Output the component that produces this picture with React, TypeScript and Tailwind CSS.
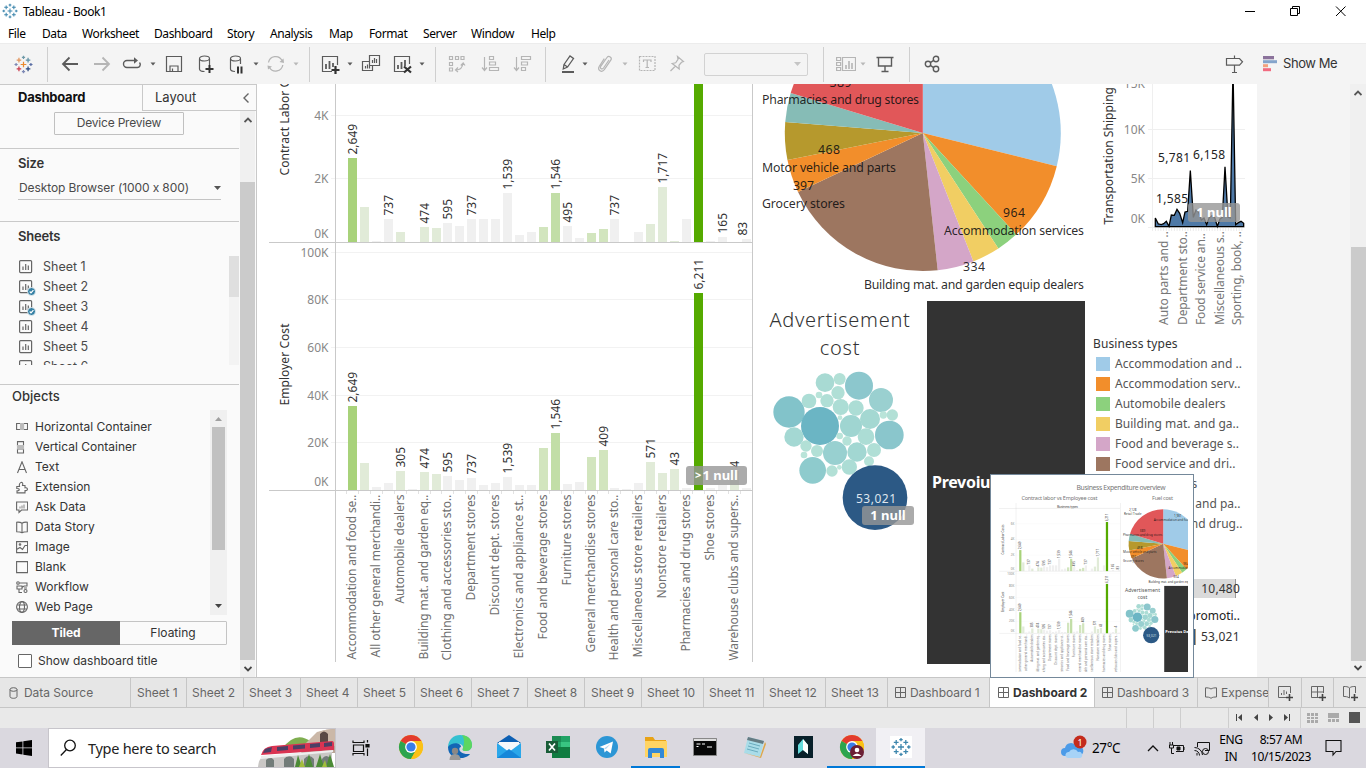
import React from "react";

const BAR_X = 348;
const PITCH = 11.93;
const G = "#f0f0f0";
const L = "#e1ebd8";
const M = "#d2e5be";
const N = "#c2dea7";
const H = "#a8d27a";
const D = "#55aa00";
const colors = [H, L, G, G, L, G, L, L, G, G, G, G, G, G, G, G, M, N, G, G, M, M, G, G, G, L, L, L, G, D, G, G, L, G];
const contract = [84, 35, 1, 23, 10, 0, 15, 14, 19, 16, 23, 23, 23, 49, 7, 10, 15, 49, 16, 4, 9, 13, 23, 0, 10, 18, 55, 1, 23, 196, 1, 5, 0, 3];
const employer = [84, 27, 3, 7, 19, 1, 18, 16, 14, 10, 12, 5, 7, 13, 5, 5, 42, 57, 6, 8, 33, 40, 2, 1, 7, 28, 17, 21, 2, 197, 2, 5, 19, 2];
type Lab = [number, string];
const contractLabels: Lab[] = [[0, "2,649"], [3, "737"], [6, "474"], [8, "595"], [10, "737"], [13, "1,539"], [17, "1,546"], [18, "495"], [22, "737"], [26, "1,717"], [29, "6,211"], [31, "165"], [32.7, "83"]];
const employerLabels: Lab[] = [[0, "2,649"], [4, "305"], [6, "474"], [8, "595"], [10, "737"], [13, "1,539"], [17, "1,546"], [21, "409"], [25, "571"], [27, "43"], [29, "6,211"], [32, "4"]];
const categories: [number, string, number][] = [
  [0, "Accommodation and food se..", 165], [2, "All other general merchandi..", 163], [4, "Automobile dealers", 109],
  [6, "Building mat. and garden eq..", 165], [8, "Clothing and accessories sto..", 166], [10, "Department stores", 106],
  [12, "Discount dept. stores", 121], [14, "Electronics and appliance st..", 164], [16, "Food and beverage stores", 145],
  [18, "Furniture stores", 91], [20, "General merchandise stores", 158], [22, "Health and personal care sto..", 166],
  [24, "Miscellaneous store retailers", 163], [26, "Nonstore retailers", 104], [28, "Pharmacies and drug stores", 157],
  [30, "Shoe stores", 66], [32, "Warehouse clubs and supers..", 166],
];

function Up({ x, y, children, len, fill = "#333", anchor = "start", size = 12 }: { x: number; y: number; children: string; len?: number; fill?: string; anchor?: "start" | "middle" | "end"; size?: number }) {
  return (
    <text transform={`translate(${x} ${y}) rotate(-90)`} textAnchor={anchor} textLength={len} fontSize={size} fill={fill}>{children}</text>
  );
}

function Bars({ values, labels, base }: { values: number[]; labels: Lab[]; base: number }) {
  return (
    <g>
      {values.map((h, i) => <rect key={i} x={Math.round(BAR_X + i * PITCH)} y={base - h} width={9} height={h} fill={colors[i]} />)}
      {labels.map(([k, t]) => (
        <Up key={k} x={BAR_X + k * PITCH + 9} y={base - values[Math.round(k)] - 3.5}>{t}</Up>
      ))}
    </g>
  );
}

function BarCharts() {
  return (
    <g>
      {[-11, 52, 115, 178, 252, 299, 347, 395, 442].map((y) => <path key={y} d={`M331 ${y + 0.5}H752`} stroke="#f2f2f2" />)}
      <Bars values={contract} labels={contractLabels} base={242} />
      <Bars values={employer} labels={employerLabels} base={490} />
      <path d="M269 242.5H752M269 490.5H752M335.5 -30V662M752.5 -30V662" stroke="#c9c9c9" fill="none" />
      {Array.from({ length: 34 }, (_, i) => <path key={i} d={`M${Math.round(BAR_X + i * PITCH) - 1.5} 491v3`} stroke="#e2e2e2" />)}
      {([["6K", 56], ["4K", 119.5], ["2K", 183], ["0K", 238], ["100K", 257], ["80K", 304], ["60K", 352], ["40K", 400], ["20K", 447], ["0K", 486]] as [string, number][]).map(([t, y]) => (
        <text key={y} x={328.5} y={y} textAnchor="end" fontSize={12} fill="#888">{t}</text>
      ))}
      <Up x={289} y={175.5} len={119}>Contract Labor Costs</Up>
      <Up x={289} y={405.5} len={82}>Employer Cost</Up>
      {categories.map(([k, t, len]) => (
        <Up key={t} x={BAR_X + k * PITCH + 8} y={494.5} len={len} anchor="end" fill="#707070">{t}</Up>
      ))}
    </g>
  );
}

const slices: [number, number, string][] = [
  [0, 103.9, "#a0cbe8"], [103.9, 137.4, "#f28e2b"], [137.4, 146.8, "#8cd17d"], [146.8, 158.5, "#f1ce63"], [158.5, 173.8, "#d4a6c8"],
  [173.8, 244.7, "#9d7660"], [244.7, 258.7, "#f28e2b"], [258.7, 274.6, "#b6992d"], [274.6, 286.8, "#86bcb6"], [286.8, 360, "#e15759"],
];
const pieLabels: [string, number, number, number][] = [
  ["2,128", 786, 0, 30], ["Retail Trade", 766, 17, 70], ["1,931", 966, 25, 30], ["Accommodation and food services", 885, 43, 194],
  ["389", 829.5, 87, 22], ["Pharmacies and drug stores", 762, 103.5, 157], ["468", 818, 154, 22], ["Motor vehicle and parts", 762, 171.5, 134],
  ["397", 793, 190, 21], ["Grocery stores", 762, 207.5, 83], ["964", 1003, 217, 22], ["Accommodation services", 944, 234.5, 140],
  ["334", 963, 271, 22], ["Building mat. and garden equip dealers", 864, 288.5, 220],
];

function Pie() {
  const p = (a: number) => {
    const t = (a * Math.PI) / 180;
    return `${922.8 + 138 * Math.sin(t)} ${133 - 138 * Math.cos(t)}`;
  };
  return (
    <g>
      {slices.map(([a, b, c]) => <path key={a} d={`M922.8 133L${p(a)}A138 138 0 0 1 ${p(b)}Z`} fill={c} />)}
      {pieLabels.map(([t, x, y, len]) => <text key={t} x={x} y={y} textLength={len} fontSize={12.3} fill="#111" fillOpacity={0.9}>{t}</text>)}
    </g>
  );
}

const bubbles: [number, number, number, string][] = [
  [225, 248, 28, "#a8dad3"], [269, 237, 18, "#b2e0d6"], [327, 257, 42, "#8cc7cd"], [264, 278, 20, "#b0dfd6"], [207, 285, 10, "#b9e4d9"],
  [177, 303, 22, "#acddd5"], [231, 302, 20, "#b0dfd6"], [272, 321, 24, "#acddd5"], [318, 324, 23, "#acddd5"], [393, 300, 36, "#9ad0d0"],
  [117, 336, 47, "#82c3ca"], [210, 378, 57, "#6bb5c4"], [270, 353, 7, "#bde6db"], [303, 378, 33, "#9fd5d1"], [360, 357, 30, "#a4d8d2"],
  [400, 345, 11, "#b9e4d9"], [427, 345, 17, "#b2e0d6"], [418, 405, 43, "#8ac6cc"], [132, 411, 29, "#a4d8d3"], [269, 408, 10, "#b9e4d9"],
  [291, 423, 14, "#b5e2d8"], [348, 410, 25, "#acddd5"], [168, 438, 17, "#b2e0d6"], [162, 465, 10, "#b9e4d9"], [201, 453, 18, "#b2e0d6"],
  [255, 459, 36, "#98d0d0"], [321, 456, 29, "#a2d7d2"], [372, 450, 21, "#b0dfd6"], [357, 484, 15, "#b5e2d8"], [188, 511, 40, "#8ecbcd"],
  [246, 513, 17, "#b2e0d6"], [268, 502, 7, "#bde6db"], [298, 501, 23, "#acddd5"], [375, 593, 97, "#2c5985"],
];

function Bubbles() {
  return (
    <g>
      {bubbles.map(([x, y, r, c]) => <circle key={`${x}-${y}`} cx={750 + x / 3} cy={300 + y / 3} r={r / 3} fill={c} />)}
      <text x={856} y={503} textLength={40} fontSize={12} fill="#dfe6ee">53,021</text>
    </g>
  );
}

const linePts: [number, number][] = [
  [211, 402], [220, 420], [229, 422], [236, 419], [244, 412], [252, 427], [259, 393], [268, 394], [276, 376], [284, 388], [293, 416],
  [300, 384], [308, 382], [316, 260], [325, 400], [333, 378], [341, 385], [349, 408], [357, 402], [365, 422], [373, 400], [381, 395],
  [389, 400], [397, 427], [405, 405], [412, 400], [420, 248], [429, 400], [436, 402], [444, -50], [452, 422], [460, 416], [468, 412], [476, 418], [476, 428],
];

function Shipping() {
  const pts = linePts.map(([x, y]) => `${1085 + x / 3},${84 + y / 3}`).join(" ");
  return (
    <svg className="block shrink-0" width={172} height={244} viewBox="1085 84 172 244">
      <path d="M1148 129.5H1245M1148 178.5H1245M1148 227.5H1245M1152.5 84V231" stroke="#efefef" fill="none" />
      {Array.from({ length: 33 }, (_, i) => <path key={i} d={`M${1155.5 + i * 2.7} 228v3`} stroke="#ececec" />)}
      <polygon points={`1155.3,226.7 ${pts}`} fill="#4e79a7" stroke="#000" strokeWidth={1.3} />
      <text x={1145} y={88} textAnchor="end" fontSize={12} fill="#888">15K</text>
      <text x={1145} y={134} textAnchor="end" fontSize={12} fill="#888">10K</text>
      <text x={1145} y={183} textAnchor="end" fontSize={12} fill="#888">5K</text>
      <text x={1145} y={223} textAnchor="end" fontSize={12} fill="#888">0K</text>
      <text x={1158} y={162} textLength={32} fontSize={12} fill="#222">5,781</text>
      <text x={1193} y={159} textLength={32} fontSize={12} fill="#222">6,158</text>
      <text x={1156} y={203} textLength={32} fontSize={12} fill="#222">1,585</text>
      <Up x={1113} y={224.5} len={137.5}>Transportation Shipping</Up>
      {([[1164, "Auto parts and .."], [1183, "Department sto.."], [1201, "Food service an.."], [1220, "Miscellaneous s.."], [1237, "Sporting, book, .."]] as [number, string][]).map(([x, t]) => (
        <Up key={x} x={x + 4} y={325} len={t[0] === "F" ? 92 : 94} fill="#777">{t}</Up>
      ))}
    </svg>
  );
}

function NullBadge({ children = "1 null", className = "" }: { children?: React.ReactNode; className?: string }) {
  return <div className={`absolute flex h-[19px] items-center justify-center rounded-[3px] bg-[#969696]/80 text-[13px] font-bold text-white ${className}`}>{children}</div>;
}

function Glyph({ className = "", faint = false, w = 20, h = 20, sw = 1.2, children }: { className?: string; faint?: boolean; w?: number; h?: number; sw?: number; children: React.ReactNode }) {
  return (
    <svg className={`shrink-0 ${faint ? "text-[#b5b5b5]" : "text-[#5b5b5b]"} ${className}`} width={w} height={h} viewBox={`0 0 ${w} ${h}`} fill="none" stroke="currentColor" strokeWidth={sw}>{children}</svg>
  );
}
function Caret({ className = "", faint = false }: { className?: string; faint?: boolean }) {
  return <svg className={`shrink-0 ${faint ? "text-[#b8b8b8]" : "text-[#5b5b5b]"} ${className}`} width={6} height={4} viewBox="0 0 6 4"><path d="M0.5 0.5h5L3 3.6z" fill="currentColor" /></svg>;
}
function Sep({ className }: { className: string }) {
  return <div className={`h-[35px] w-px shrink-0 bg-[#cfcfcf] ${className}`} />;
}
function TableauMark({ size, mono = false }: { size: number; mono?: boolean }) {
  const marks: [number, number, number, string][] = [
    [10, 10, 3, "#eb8a2e"], [10, 2.6, 1.7, "#6f9aa8"], [10, 17.4, 1.7, "#7e89b5"], [2.2, 10, 1.7, "#7e89b5"], [17.8, 10, 1.7, "#5b6fa5"],
    [5.2, 5.4, 2.4, "#e0945c"], [14.8, 5.4, 2.4, "#5e8fa3"], [5.2, 14.6, 2.4, "#c93a4c"], [14.8, 14.6, 2.4, "#27457c"],
  ];
  return (
    <svg className="shrink-0" width={size} height={size} viewBox="0 0 20 20" fill="none" strokeWidth={1.3}>
      {marks.map(([x, y, r, c]) => <path key={`${x}${y}`} d={`M${x - r} ${y}h${2 * r}M${x} ${y - r}v${2 * r}`} stroke={mono ? "#3d86ad" : c} />)}
    </svg>
  );
}

function TitleBar() {
  return (
    <div className="flex h-[22px] shrink-0 items-center bg-white pl-[2px] pr-[18px]">
      <TableauMark size={16} mono />
      <span className="ml-[5px] pt-[2px] text-[12px] tracking-[-0.4px] text-black">Tableau - Book1</span>
      <svg className="ml-auto" width={104} height={20} viewBox="0 0 104 20" fill="none" stroke="#000">
        <path d="M1 10.5h10M46.5 7.500h7v7h-7zM48.500 7.500v-2h7v7h-2M92 5.500l9.500 9.500M101.500 5.500L92 15" />
      </svg>
    </div>
  );
}

function MenuBar() {
  return (
    <div className="flex h-[21px] shrink-0 items-center bg-white pl-2 pt-[2px] text-[12px] tracking-[-0.4px] text-black">
      <span className="w-[34px]">File</span><span className="w-10">Data</span><span className="w-[72px]">Worksheet</span>
      <span className="w-[73px]">Dashboard</span><span className="w-[43px]">Story</span><span className="w-[59px]">Analysis</span>
      <span className="w-10">Map</span><span className="w-[54px]">Format</span><span className="w-12">Server</span>
      <span className="w-[60px]">Window</span><span>Help</span>
    </div>
  );
}

function Toolbar() {
  return (
    <div className="flex h-[41px] shrink-0 items-center border-t border-[#ececec] bg-[#f4f4f4] pl-[14px] pr-[29px]">
      <TableauMark size={19} />
      <Sep className="ml-[14px]" />
      <Glyph className="ml-3" sw={1.8}><path d="M18 10H3M9.500 3.500L3 10l6.500 6.500" /></Glyph>
      <Glyph className="ml-3" faint sw={1.8}><path d="M2 10h15M10.500 3.500L17 10l-6.500 6.500" /></Glyph>
      <Glyph className="ml-[10px]" sw={1.4}><path d="M13 6.500H5a3.500 3.500 0 0 0 0 7h10a3 3 0 0 0 2.500-5" /><path d="M12 3.200l4 3.300-4 3.300z" fill="currentColor" stroke="none" /></Glyph>
      <Caret className="ml-2" />
      <Glyph className="ml-2"><path d="M2.500 2.500h15v15h-15zM6 17v-5h8v5M8.500 17v-2.500" /></Glyph>
      <Glyph className="ml-3"><path d="M3.500 5v10c0 1.500 2 2.500 5 2.500M13.500 5v6" /><ellipse cx="8.500" cy="4.500" rx="5" ry="2.500" /><path d="M13.500 11v8M9.500 15h8" stroke="#333" strokeWidth="2" /></Glyph>
      <Glyph className="ml-[10px]"><path d="M4.500 5v10c0 1.500 1.500 2.300 4.500 2.500M14.500 5v5" /><ellipse cx="9.500" cy="4.500" rx="5" ry="2.500" /><path d="M12 12.500v7M15.500 12.500v7" stroke="#333" strokeWidth="2" /></Glyph>
      <Caret className="ml-[7px]" />
      <Glyph className="ml-[7px]" faint sw={1.3}><path d="M2.500 8.500A7.200 7.200 0 0 1 16 6.500M16.800 11A7.200 7.200 0 0 1 3.500 13.500" /><path d="M17.500 4.500l.5 4.500-4.500-1zM1.500 11.500l4.500 1-4 3z" fill="currentColor" stroke="none" /></Glyph>
      <Caret className="ml-[7px]" faint />
      <Sep className="ml-[10px]" />
      <Glyph className="ml-[10px]"><path d="M17.500 11V2.500h-15v15H12" /><path d="M6 10v5M9.500 7v8M13 9v4" strokeWidth="1.800" /><path d="M15.500 12v8M11.500 16h8" stroke="#333" strokeWidth="2.200" /></Glyph>
      <Caret className="ml-[7px]" />
      <Glyph className="ml-2"><path d="M8.500 1.500h10v10h-10zM8.500 7.500h-7v9h10v-5M11.500 6v3M13.500 4v5M15.500 5v4M4.500 12v2.500M6.500 10.500v4M8.500 12v2.500" /></Glyph>
      <Glyph className="ml-[11px]"><path d="M17.500 10V2.500h-15v15H12" /><path d="M6 11v4M9.500 8v7M13 6v6" strokeWidth="1.800" /><path d="M12 12.500l7 6M19 12.500l-7 6" stroke="#333" strokeWidth="2.200" /></Glyph>
      <Caret className="ml-[7px]" />
      <Sep className="ml-[10px]" />
      <Glyph className="ml-[11px]" faint><path d="M2.500 2.500h3v3h-3zM8.500 2.500h3v3h-3zM14 2.500h3v3h-3zM2.500 8.500h3v3h-3zM2.500 14h3v3h-3zM9 16c4.500 0 6.500-2 7-7M13.800 11.500l2.400-2.500 1.800 2.500M11 13.500L8.500 16l2.500 2" /></Glyph>
      <Glyph className="ml-[13px]" faint><path d="M4.500 3v13M2 13.500l2.500 3 2.500-3M9.500 2.500h4v3h-4zM9.500 8h6v3h-6zM9.500 13.500h9v3h-9z" /></Glyph>
      <Glyph className="ml-3" faint><path d="M4.500 3v13M2 13.500l2.500 3 2.500-3M9.500 2.500h9v3h-9zM9.500 8h6v3h-6zM9.500 13.500h4v3h-4z" /></Glyph>
      <Sep className="ml-[13px]" />
      <Glyph className="ml-3" sw={1.3}><path d="M6 10.500l6-8.500 3.500 2.500-6 8.500-4.200 2zM6 10.500l3.500 2.500" /><path d="M4 18h12" strokeWidth="2" /></Glyph>
      <Caret className="ml-1" />
      <Glyph className="ml-[7px]" faint><path d="M14 6l-5.500 8c-1.500 2-4 .5-2.800-1.700L12 3.500c1.800-2.500 5.500 0 3.800 2.700l-6.500 9.500c-2.500 3.300-7.300.5-5-3.500l5-7.500" /></Glyph>
      <Caret className="ml-[7px]" faint />
      <Glyph className="ml-[9px]" faint><rect x="2.500" y="2.500" width="15.500" height="14" strokeDasharray="2 1" /><path d="M6.500 8V6h7.500v2M10.200 6v7.500M8.500 13.500H12" /></Glyph>
      <Glyph className="ml-[10px]" faint><path d="M10.500 2.500l6 5-2 .8-2.500 3 .2 3.700-7-5.500 3.500-.7 2.300-3.500zM8.500 12l-5 5" /></Glyph>
      <div className="ml-[17px] flex h-[23px] w-[104px] shrink-0 items-center justify-end rounded-[2px] border border-[#d2d2d2] pr-[6px]"><svg width={7} height={4}><path d="M0 0h7L3.500 4z" fill="#c5c5c5" /></svg></div>
      <Sep className="ml-[15px]" />
      <Glyph className="ml-3" faint><path d="M.6 3.500h4v3h-4zM.6 8.500h4v3h-4zM.6 13.500h4v3h-4zM6.500 3.500h13v13h-13z" /><path d="M10 11v4M13 7v8M16 9v6" strokeWidth="1.600" /></Glyph>
      <Caret className="ml-1" faint />
      <Glyph className="ml-[9px]" sw={1.4}><path d="M1.500 3.500h17M3.500 3.500v8.500h13V3.500M10 12v5M6.500 17.500h7" /></Glyph>
      <Sep className="ml-[14px]" />
      <Glyph className="ml-3" sw={1.4}><circle cx="6" cy="10" r="2.700" /><circle cx="14" cy="5" r="2.700" /><circle cx="14" cy="15" r="2.700" /><path d="M8.300 8.600l3.400-2.200M8.300 11.400l3.400 2.200" /></Glyph>
      <Glyph className="ml-auto"><path d="M2.500 4.500h13l3 3.300-3 3.300h-13zM10.500 1.500v3M10.500 11v7.500M8 18.500h5" /></Glyph>
      <svg className="ml-[19px] shrink-0" width={14} height={16} viewBox="0 0 14 16"><path d="M0 0h11v3.300H0z" fill="#8b729b" /><path d="M0 4.200h14v3H0z" fill="#84a4cb" /><path d="M0 8.200h5v3H0z" fill="#f3a27e" /><path d="M0 12.200h8v3H0z" fill="#f26b80" /></svg>
      <span className="ml-[6px] w-[54px] whitespace-nowrap font-[Inter] text-[13px] tracking-[-0.45px] text-[#333]">Show Me</span>
    </div>
  );
}

function SheetGlyph({ used = false }: { used?: boolean }) {
  return (
    <svg className="mr-[7px] shrink-0" width={17} height={18} viewBox="0 0 17 18" fill="none" stroke="#666" strokeWidth={1.2}>
      <rect x="0.600" y="2.600" width="12" height="12" rx="1" /><path d="M4 8.500v3.500M6.700 6v6M9.300 7.500v4.500" />
      {used && <><circle cx="12.500" cy="13.500" r="4" fill="#3580a4" stroke="#fafafa" strokeWidth=".8" /><path d="M10.700 13.500l1.300 1.300 2.400-2.600" stroke="#fff" /></>}
    </svg>
  );
}

const objectItems: [string, React.ReactNode][] = [
  ["Horizontal Container", <><path d="M.6 2.500h4v6h-4zM7.500 2.500h4v6h-4z" /><path d="M4.500 2.500h3v6h-3z" fill="#bbb" stroke="#bbb" /></>],
  ["Vertical Container", <><path d="M1.500.6h6v4h-6zM1.500 8h6v4h-6z" /><path d="M1.500 4.500h6V8h-6z" fill="#bbb" stroke="#bbb" /></>],
  ["Text", <path d="M1.500 12L6 .8 10.500 12M3 8.500h6" />],
  ["Extension", <path d="M.8 5.500h2.700C2.500 1.500 6.500 0 6.800 3L6.500 4.500H9v2.300c3-.8 3.500 3.300 0 2.800v2.300H1v-2c3 .2 3-2.600-.2-2.400z" />],
  ["Ask Data", <><path d="M.6 1h11v8H5.500L3 11.500V9H.6z" /><path d="M4 5.500v2M6 4.500v3M8 3.500v4" stroke="#aaa" strokeWidth="1.500" /></>],
  ["Data Story", <path d="M6 2.300C4.500 1.200 2.500 1 .7 1.200v9.500c2 0 3.800 0 5.300 1 1.500-1 3.300-1 5.300-1V1.200C9.500 1 7.500 1.200 6 2.300zv9.300" />],
  ["Image", <><path d="M.6.600h11v11H.6zM.6 8.500L4 6.500l2.500 2 2.500-4h2.500" /><circle cx="4" cy="3.500" r=".8" /></>],
  ["Blank", <path d="M.6.600h11v11H.6z" />],
  ["Workflow", <><circle cx="2" cy="2" r="1.300" /><circle cx="9.500" cy="10" r="1.500" /><path d="M3.500 2H11v3H8M1 5h5v3H1zM8 5L6 6.500M3 8v3.500h3M8 7h3" /></>],
  ["Web Page", <><circle cx="6" cy="6" r="5.400" /><ellipse cx="6" cy="6" rx="2.500" ry="5.400" /><path d="M1.200 4h9.600M1.200 8h9.600" /></>],
];

function Sidebar() {
  return (
    <aside className="flex w-[257px] shrink-0 flex-col border-r border-t border-[#c9c9c9] bg-[#fafafa] font-[Inter] text-[12px] text-[#4a4a4a]">
      <div className="flex h-[26px] shrink-0">
        <div className="flex w-[142px] items-center pl-[18px] text-[13px] font-bold tracking-[-0.25px] text-[#111]">Dashboard</div>
        <div className="flex flex-1 items-center justify-between border-b border-l border-[#c9c9c9] pl-3 pr-[7px] text-[13px] text-[#333]">Layout
          <svg width={6} height={10} fill="none" stroke="#666" strokeWidth={1.4}><path d="M5.500 .5L1 5l4.500 4.500" /></svg>
        </div>
      </div>
      <div className="flex min-h-0 flex-1">
        <div className="w-[239px] shrink-0">
          <div className="h-[38px] border-b border-[#c9c9c9] pl-[54px] pt-px"><div className="flex h-[23px] w-[130px] items-center justify-center rounded-[1px] border border-[#c0c0c0] pb-px tracking-[-0.2px]">Device Preview</div></div>
          <div className="h-[73px] border-b border-[#c9c9c9] pl-[18px] pt-[5px]">
            <div className="text-[13px] font-semibold leading-[18px] tracking-[-0.2px] text-[#333]">Size</div>
            <div className="mt-[6px] flex h-[22px] w-[203px] items-center justify-between border-b border-[#c4c4c4] pb-px pl-px tracking-[-0.1px]">Desktop Browser (1000 x 800)<svg width={7} height={4}><path d="M0 0h7L3.500 4z" fill="#555" /></svg></div>
          </div>
          <div className="h-[163px] border-b border-[#c9c9c9]">
            <div className="pl-[18px] pt-[5px] text-[13px] font-semibold leading-[18px] tracking-[-0.2px] text-[#333]">Sheets</div>
            <div className="mt-[11px] flex h-[109px] justify-between overflow-hidden">
              <div className="pl-[19px] pt-px text-[12.500px]">
                {[1, 2, 3, 4, 5, 6].map((n) => <div key={n} className="flex h-5 items-center"><SheetGlyph used={n === 2 || n === 3} />Sheet {n}</div>)}
              </div>
              <div className="w-[10px] bg-[#f3f3f3]"><div className="h-[41px] bg-[#dfdfdf]" /></div>
            </div>
          </div>
          <div className="pl-3 pt-[1px] text-[13px] font-medium leading-[20px] text-[#333]">Objects</div>
          <div className="mt-[4px] flex h-[205px] pl-4">
            <div className="w-[194px] pt-[7px] text-[#333]">
              {objectItems.map(([name, icon]) => (
                <div key={name} className="flex h-5 items-center"><svg className="mr-[7px]" width={12} height={13} viewBox="0 0 12 13" fill="none" stroke="#666" strokeWidth={1.1}>{icon}</svg>{name}</div>
              ))}
            </div>
            <div className="flex w-[17px] flex-col items-center bg-[#f0f0f0]">
              <svg className="mt-[7px]" width={7} height={4}><path d="M0 4h7L3.500 0z" fill="#a0a0a0" /></svg>
              <div className="mt-[6px] h-[123px] w-[13px] bg-[#c1c1c1]" />
              <svg className="mt-auto mb-[7px]" width={7} height={4}><path d="M0 0h7L3.500 4z" fill="#444" /></svg>
            </div>
          </div>
          <div className="ml-3 mt-[6px] flex h-6 w-[215px] rounded-[1px] border border-[#c4c4c4]">
            <div className="-my-px -ml-px flex w-[108px] items-center justify-center bg-[#666] font-bold text-white">Tiled</div>
            <div className="flex flex-1 items-center justify-center text-[#333]">Floating</div>
          </div>
          <div className="mt-[7px] flex items-center pl-[18px] text-[#333]"><div className="mr-[6px] h-[14px] w-[14px] rounded-[1px] border border-[#666] bg-white" />Show dashboard title</div>
        </div>
        <div className="ml-px flex w-[15px] flex-col items-center bg-[#f0f0f0]">
          <svg className="mt-[6px] shrink-0" width={8} height={6} fill="none" stroke="#555" strokeWidth={1.800}><path d="M.5 5L4 1.500 7.500 5" /></svg>
          <div className="mt-[59px] h-[478px] w-[15px] shrink-0 bg-[#cbcbcb]" />
          <svg className="mt-[6px] shrink-0" width={8} height={6} fill="none" stroke="#444" strokeWidth={1.800}><path d="M.5 1L4 4.500 7.500 1" /></svg>
        </div>
      </div>
    </aside>
  );
}

function Preview() {
  return (
    <div className="absolute left-[733px] top-[390px] z-10 h-[204px] w-[204px] border border-[#74889a] bg-white pl-px">
      <svg className="block" width={196} height={197} viewBox="0 0 196 197">
        <text x={84.500} y={14.500} textLength={89} fontSize={6.800} fill="#777">Business Expenditure overview</text>
        <text x={29.500} y={25} textLength={76} fontSize={5.500} fill="#777">Contract labor vs Employee cost</text>
        <text x={160} y={25} textLength={21} fontSize={5.500} fill="#777">Fuel cost</text>
        <text x={65} y={32.500} textLength={21} fontSize={3.500} fill="#333">Business types</text>
        <path d="M7 33.500h121" stroke="#e2e2e2" strokeWidth={0.500} />
        <g transform="translate(-60 35.500) scale(.2505)">
          <BarCharts /><Pie /><Bubbles />
          <text x={770} y={327} textLength={140} fontSize={20} fill="#555">Advertisement</text>
          <text x={820} y={355} textLength={40} fontSize={20} fill="#555">cost</text>
          <rect x={927} y={301} width={158} height={410} fill="#333" />
          <text x={931} y={488} fontSize={16} fontWeight={700} fill="#fff">Prevoius Dashboard</text>
        </g>
      </svg>
    </div>
  );
}

const legend: [string, string][] = [
  ["#a0cbe8", "Accommodation and .."], ["#f28e2b", "Accommodation serv.."], ["#8cd17d", "Automobile dealers"], ["#f1ce63", "Building mat. and ga.."],
  ["#d4a6c8", "Food and beverage s.."], ["#9d7660", "Food service and dri.."], ["#f28e2b", "Grocery stores"], ["#b6992d", "Motor vehicle and pa.."], ["#86bcb6", "Pharmacies and drug.."],
];

function Workspace() {
  return (
    <main className="relative flex min-w-0 flex-1 bg-[#f4f4f4]">
      <section className="relative w-[496px] shrink-0 bg-white">
        <svg className="block" width={496} height={593} viewBox="257 84 496 593"><BarCharts /></svg>
        <NullBadge className="left-[429px] top-[382px] w-[61px]"><span className="mr-[1px] text-[11px]">&gt;</span>1 null</NullBadge>
      </section>
      <section className="flex w-[332px] shrink-0 flex-col bg-white">
        <svg className="block shrink-0" width={332} height={217} viewBox="753 84 332 217"><Pie /></svg>
        <div className="flex flex-1">
          <div className="relative flex w-[174px] flex-col">
            <h2 className="pt-[5px] text-center text-[20px] font-light leading-[28px] tracking-[0.7px] text-[#333]">Advertisement<br />cost</h2>
            <svg className="block" width={174} height={170} viewBox="753 362 174 170"><Bubbles /></svg>
            <NullBadge className="left-[109px] top-[205px] w-[52px]" />
          </div>
          <div className="flex h-[363px] w-[158px] items-center overflow-hidden whitespace-nowrap bg-[#333] pb-[2px] pl-[5px] text-[16px] font-bold tracking-[-0.3px] text-white">Prevoius Dashboard</div>
        </div>
      </section>
      <section className="relative flex w-[172px] shrink-0 flex-col bg-white text-[12px] text-[#555]">
        <Shipping />
        <NullBadge className="left-[103px] top-[119px] w-[52px]" />
        <div className="mt-[6px] pl-2 leading-5 tracking-[0.1px] text-[#333]">Business types</div>
        {legend.map(([c, t]) => (
          <div key={t} className="flex h-5 items-center whitespace-nowrap pl-[11px] tracking-[0.02px]"><span className={"mr-[5px] h-[14px] w-[14px] shrink-0"} style={{ backgroundColor: c }} />{t}</div>
        ))}
        <div className="mt-[45px] flex h-[19px] w-[151px] items-center justify-end border-r border-[#999] bg-[#dadada]"><span className="-mr-[5px] tracking-[0.2px] text-[#333]">10,480</span></div>
        <div className="mt-2 w-[155px] whitespace-nowrap text-right leading-5 text-[#222]">Sales promoti..</div>
        <div className="mt-[2px] flex h-[18px] items-center tracking-[0.2px] text-[#333]"><span className="ml-2 mr-[5px] h-4 w-[103px] border-r border-[#b09b80] bg-[#2c5985]" />53,021</div>
      </section>
      <div className="ml-auto flex w-4 shrink-0 flex-col items-center bg-[#f0f0f0]">
        <svg className="mt-[6px] shrink-0" width={8} height={6} fill="none" stroke="#555" strokeWidth={1.800}><path d="M.5 5L4 1.500 7.500 5" /></svg>
        <div className="mt-[151px] h-[414px] w-[15px] shrink-0 bg-[#cbcbcb]" />
        <svg className="mt-[4px] shrink-0" width={8} height={6} fill="none" stroke="#444" strokeWidth={1.800}><path d="M.5 1L4 4.500 7.500 1" /></svg>
      </div>
      <Preview />
    </main>
  );
}

function GridGlyph() {
  return <svg className="ml-px mr-1 shrink-0" width={11} height={11} fill="none" stroke="#666"><path d="M.5.5h10v10H.5zM5.500.5v10M.5 5.500h10" /></svg>;
}
function Tab({ w, children, active = false }: { w: string; children: React.ReactNode; active?: boolean }) {
  return <div className={`flex shrink-0 items-center overflow-hidden whitespace-nowrap border-r border-[#c6c6c6] pl-[6px] ${w} ${active ? "bg-white font-bold text-[#333]" : "tracking-[-0.05px]"}`}>{children}</div>;
}

function SheetTabs() {
  return (
    <div className="flex h-[31px] shrink-0 border-b border-t border-[#c6c6c6] bg-[#e6e6e6] font-[Inter] text-[12px] text-[#666]">
      <Tab w="w-[131px]"><svg className="ml-[3px] mr-[6px]" width={9} height={12} fill="none" stroke="#666"><ellipse cx="4.500" cy="2.500" rx="3.500" ry="1.800" /><path d="M1 2.500v7c0 2.400 7 2.400 7 0v-7" /></svg>Data Source</Tab>
      <Tab w="w-[56px]">Sheet 1</Tab><Tab w="w-[57px]"><span className="-ml-px">Sheet 2</span></Tab><Tab w="w-[57px]"><span className="-ml-px">Sheet 3</span></Tab><Tab w="w-[57px]"><span className="-ml-px">Sheet 4</span></Tab>
      <Tab w="w-[57px]"><span className="-ml-px">Sheet 5</span></Tab><Tab w="w-[57px]"><span className="-ml-px">Sheet 6</span></Tab><Tab w="w-[56px]"><span className="-ml-px">Sheet 7</span></Tab><Tab w="w-[57px]">Sheet 8</Tab><Tab w="w-[57px]">Sheet 9</Tab>
      <Tab w="w-[62px]"><span className="-ml-px">Sheet 10</span></Tab><Tab w="w-[60px]"><span className="-ml-px">Sheet 11</span></Tab><Tab w="w-[62px]"><span className="-ml-px">Sheet 12</span></Tab><Tab w="w-[62px]"><span className="-ml-px">Sheet 13</span></Tab>
      <Tab w="w-[102px]"><GridGlyph />Dashboard 1</Tab><Tab w="w-[105px]" active><span className="w-px" /><GridGlyph />Dashboard 2</Tab><Tab w="w-[103px]"><GridGlyph />Dashboard 3</Tab>
      <Tab w="w-[71px]"><svg className="ml-px mr-1 shrink-0" width={12} height={12} fill="none" stroke="#666"><path d="M6 2C4.500 1 2.500.8.500.8V10c2 0 4 0 5.500 1.300C7.500 10 9.500 10 11.500 10V.8C9.500.8 7.500 1 6 2z" /></svg>Expense</Tab>
      <div className="flex w-[33px] items-center justify-center border-r border-[#c6c6c6]"><svg width={16} height={16} fill="none" stroke="#666"><path d="M13.500 8V1.500H1.500v11H9M4.500 8v2M7 5v5M9.500 6.500V9" /><path d="M12.500 9v7M9 12.500h7" stroke="#444" strokeWidth="1.600" /></svg></div>
      <div className="flex w-[32px] items-center justify-center border-r border-[#c6c6c6]"><svg width={16} height={16} fill="none" stroke="#666"><path d="M13.500 8V1.500H1.500v11H9M7.500 1.500v11M1.500 7h12" /><path d="M12.500 9v7M9 12.500h7" stroke="#444" strokeWidth="1.600" /></svg></div>
      <div className="flex flex-1 items-center justify-center"><svg width={16} height={16} fill="none" stroke="#666"><path d="M7.500 3C6 1.500 4 1.500 1.500 1.500v10c2 0 4 0 6 1.500V3C9 1.500 11 1.500 13.500 1.500V8" /><path d="M12.500 9v7M9 12.500h7" stroke="#444" strokeWidth="1.600" /></svg></div>
    </div>
  );
}

function StatusBar() {
  return (
    <div className="flex h-5 shrink-0 justify-end bg-[#e9e9e9]">
      <svg width={240} height={20} viewBox="1126 708 240 20" fill="#444">
        <path d="M1126.500 708v20M1153.500 708v20M1180.500 708v20M1228.500 708v20M1300.500 708v20" stroke="#cecece" />
        <path d="M1236 714h1v7h-1zM1242 714v7l-4-3.500zM1258 714v7l-4-3.500zM1269 714v7l4-3.500zM1284 714v7l4-3.500zM1289 714h1v7h-1z" />
        <path d="M1307 713h3v3h-3zM1311 713h3v3h-3zM1315 713h3v3h-3zM1307 717h3v2h-3zM1311 717h3v2h-3zM1315 717h3v2h-3zM1307 720h3v3h-3zM1311 720h3v3h-3zM1315 720h3v3h-3z" fill="#aaa" />
        <path d="M1328 713h11v5h-11zM1328 719h3v3h-3zM1332 719h3v3h-3zM1336 719h3v3h-3z" fill="#aaa" />
        <path d="M1349 712h11v11h-11z" fill="#555" />
      </svg>
    </div>
  );
}

function TaskApp({ children, open = false, active = false }: { children: React.ReactNode; open?: boolean; active?: boolean }) {
  return (
    <div className={`flex h-10 w-[49px] shrink-0 items-center justify-center border-b-2 ${open ? "border-[#0078d7]" : "border-transparent"} ${active ? "bg-[#f1f0f4]" : ""}`}>
      <svg width={26} height={26} viewBox="0 0 26 26">{children}</svg>
    </div>
  );
}
function ChromeArt() {
  return (
    <g>
      <circle cx="13" cy="13" r="12" fill="#fbc116" />
      <path d="M13 13L2.600 7A12 12 0 0 1 23.400 7z" fill="#e33b2e" /><path d="M2.600 7A12 12 0 0 0 13 25l5.200-9L13 13z" fill="#2da44f" />
      <path d="M13 7h10.400A12 12 0 0 1 13 25l5-9z" fill="#fbc116" /><circle cx="13" cy="13" r="5.900" fill="#fff" /><circle cx="13" cy="13" r="4.600" fill="#3a7de9" />
    </g>
  );
}

function Taskbar() {
  return (
    <footer className="flex h-10 shrink-0 items-center bg-[#dad8df] text-black">
      <div className="flex w-[48px] shrink-0 justify-center"><svg width={16} height={16}><path d="M0 2.300L6.500 1.400v6.100H0zM7.300 1.300L16 0v7.500H7.300zM0 8.300h6.500v6.200L0 13.600zM7.300 8.300H16V16l-8.700-1.300z" fill="#000" /></svg></div>
      <div className="flex h-10 w-[288px] shrink-0 items-center border border-[#c7c5cb] bg-white pl-[11px]">
        <svg width={17} height={18} fill="none" stroke="#111" strokeWidth={1.300}><circle cx="10" cy="6.500" r="5.300" /><path d="M6.500 10.500L.8 16.500" /></svg>
        <span className="ml-[11px] whitespace-nowrap pt-px text-[14.500px] tracking-[-0.28px] text-[#222]">Type here to search</span>
        <svg className="ml-auto" width={78} height={38} viewBox="0 0 78 38">
          <path d="M52 13L62 3Q69 0 78 0v24H44z" fill="#b9a598" />
          <path d="M25 20Q39 1 54 13l-4 8z" fill="#7fae50" /><path d="M48 15L60 3Q69 0 78 0v17z" fill="#cbb8a8" />
          <path d="M63 14V5q4-5 8 0v9z" fill="#5a4945" />
          <path d="M1 38Q2 27 9 27l66-5v16z" fill="#c9c7c5" />
          <path d="M9 38v-7q4-5 8 0v7zM27 38v-8q5-6 10 0v8zM47 38v-8q5-6 10 0v8zM65 38v-8q4-6 9 0v8z" fill="#727c79" />
          <path d="M4 26Q6 18 15 17l60-5q2 0 2 3v6L18 25z" fill="#d93452" /><path d="M4 27l72-6v2L4 30z" fill="#eee" />
          <path d="M8 20l7-2-1 5-8 1zM20 18l11-1v4l-11 1zM36 16.500l12-1v4l-12 1zM53 15l10-1v4l-10 1zM67 14l8-1v4l-8 1z" fill="#4b3f66" />
          <path d="M38 38l3-12 4 12zM48 38l4-13 4 13zM59 38l4-13 4 13zM69 38l4-13 4 13z" fill="#4c8b37" /><path d="M42 38l3-8 3 8zM65 38l3-7 2 7z" fill="#a2bd3c" />
        </svg>
      </div>
      <div className="flex w-[50px] shrink-0 justify-center"><svg width={18} height={16} fill="none" stroke="#111" strokeWidth={1.200}><path d="M1 .5v2h11v-2M1.500 5h10v6.500h-10zM1 15.500v-2h11v2M15.500 0v2.500M15.500 8.500V16" /><path d="M14 4.500h3v2.500h-3z" fill="#111" /></svg></div>
      <TaskApp><ChromeArt /></TaskApp>
      <TaskApp><path d="M1 14C1 5 7 1 13 1c7 0 12 4 12 10 0 5-4 6-7 6-2 0-3-1-2-3 1-4-7-7-15 0z" fill="#35c1d1" /><path d="M1 13C4 8 14 8 14 13c-3 0-3 8 9 7-4 6-22 7-22-7z" fill="#1366b5" /><path d="M15 1c7 1 10 5 10 10 0 5-4 6-7 6-2 0-3-1-2-3 1-4 2-8-1-13z" fill="#5dd65f" /><circle cx="8" cy="17" r="3.200" fill="#8b8886" /><path d="M2.500 26q0-6 5.500-6t5.500 6z" fill="#9c9997" /></TaskApp>
      <TaskApp><path d="M1 9L13 1l12 8z" fill="#0d5fb3" /><path d="M3 8h20v10H3z" fill="#f6f8fb" /><path d="M1 9l12 9 12-9v15H1z" fill="#2aa7ea" /><path d="M1 24l12-9 12 9z" fill="#1687d9" /></TaskApp>
      <TaskApp><path d="M7 2h18v22H7z" fill="#21a366" /><path d="M7 2h9v6H7z" fill="#1b8a52" /><path d="M16 8h9v5h-9z" fill="#38c481" /><path d="M7 13h18v11H7z" fill="#107c41" /><path d="M1 7h12v12H1z" fill="#185c37" /><path d="M4 9.500l6 7M10 9.500l-6 7" stroke="#fff" strokeWidth="1.700" /></TaskApp>
      <TaskApp><circle cx="13" cy="13" r="11" fill="#2c96d5" /><path d="M5.500 13L19 7.500l-2.300 12-4-3-2.200 2-.5-4z" fill="#fff" /><path d="M10 14.500l6.500-4.500-4.500 5z" fill="#afd5ee" /></TaskApp>
      <TaskApp open><path d="M2 3h8l2 3h11v17H2z" fill="#e8a317" /><path d="M2 7h22v16H2z" fill="#ffd463" /><path d="M5 24v-8q0-2 2-2h12q2 0 2 2v8h-4v-5H9v5z" fill="#3389d6" /></TaskApp>
      <TaskApp><path d="M1.500 4.500h23v17h-23z" fill="#080808" stroke="#888" /><path d="M2 5h22v2H2z" fill="#ddd" /><path d="M4.500 10h4M10 10h3M4.500 12.500l2 0M15 13h5" stroke="#fff" /></TaskApp>
      <TaskApp><path d="M7 3l16 4-4 16L3 19z" fill="#a9dce8" /><path d="M7 3l16 4-1 3L6 6z" fill="#657b83" /><path d="M8 9l11 3M7 12l11 3M6 15l11 3" stroke="#6aacbf" /><path d="M3 19l16 4 5-15 1 2-5 14z" fill="#dda74a" /></TaskApp>
      <TaskApp><path d="M4 2h19v22H4z" fill="#08202a" /><path d="M8 11l5-6 5 6v9l-5-4-5 4z" fill="#65dcdd" /><path d="M13 5l5 6v9l-5-4z" fill="#fff" /></TaskApp>
      <TaskApp open><ChromeArt /><circle cx="18" cy="18" r="7" fill="#6b1f35" /><circle cx="18" cy="16" r="2.300" fill="#fff" /><path d="M13.500 22q4.500-5 9 0z" fill="#fff" /></TaskApp>
      <TaskApp open active><rect x="2" y="2" width="22" height="22" fill="#fff" /><g transform="translate(3 3)"><TableauMark size={20} mono /></g></TaskApp>
      <div className="ml-auto flex items-center text-[12px] tracking-[-0.4px]">
        <svg width={28} height={26} viewBox="0 0 28 26"><path d="M5 21a4 4 0 0 1 0-8 6 6 0 0 1 11-2 5 5 0 1 1 4 10z" fill="#4c9be8" /><path d="M8 23a3 3 0 0 1 1-6 5 5 0 0 1 9 0 3 3 0 0 1 2 6z" fill="#a7d3f7" /><circle cx="20" cy="7" r="6.500" fill="#c42b1c" /><text x="17.500" y="10.500" fontSize="9" fill="#fff">1</text></svg>
        <span className="ml-[4px] w-[55px] text-[13.500px]">27°C</span>
        <svg width={12} height={8} fill="none" stroke="#111" strokeWidth={1.300}><path d="M1 7l5-5 5 5" /></svg>
        <svg className="ml-[10px]" width={17} height={16} fill="none" stroke="#111"><path d="M5 5.500h9.500v6H7M15 7v3M3.500 2v3M1 2v3M.5 5h4v3h-4zM2.500 8v5.500H5" /><path d="M8 7h3v3H8z" fill="#111" /></svg>
        <svg className="ml-[8px]" width={16} height={16} fill="none" stroke="#111"><path d="M3.500 7V2.500h12v8H11M3 15.500v-2.500M.5 7.500A8 8 0 0 1 8.500 15M.5 10.500a5 5 0 0 1 5 5" /><circle cx="11.500" cy="11.500" r="3" /></svg>
        <div className="ml-[7px] w-[28px] text-center leading-[17px]">ENG<br />IN</div>
        <div className="ml-[2px] w-[68px] text-center leading-[17px]">8:57 AM<br />10/15/2023</div>
        <svg className="ml-[10px] mr-[23px]" width={18} height={18} fill="none" stroke="#111" strokeWidth={1.100}><path d="M1 1.500h15v11h-5L8 16v-3.500H1z" /></svg>
      </div>
    </footer>
  );
}

export default function App() {
  return (
    <div className="flex h-[768px] w-[1366px] flex-col overflow-hidden bg-white font-['Noto_Sans','Open_Sans',sans-serif] text-[#222]">
      <TitleBar />
      <MenuBar />
      <Toolbar />
      <div className="flex h-[593px] shrink-0"><Sidebar /><Workspace /></div>
      <SheetTabs />
      <StatusBar />
      <Taskbar />
    </div>
  );
}
